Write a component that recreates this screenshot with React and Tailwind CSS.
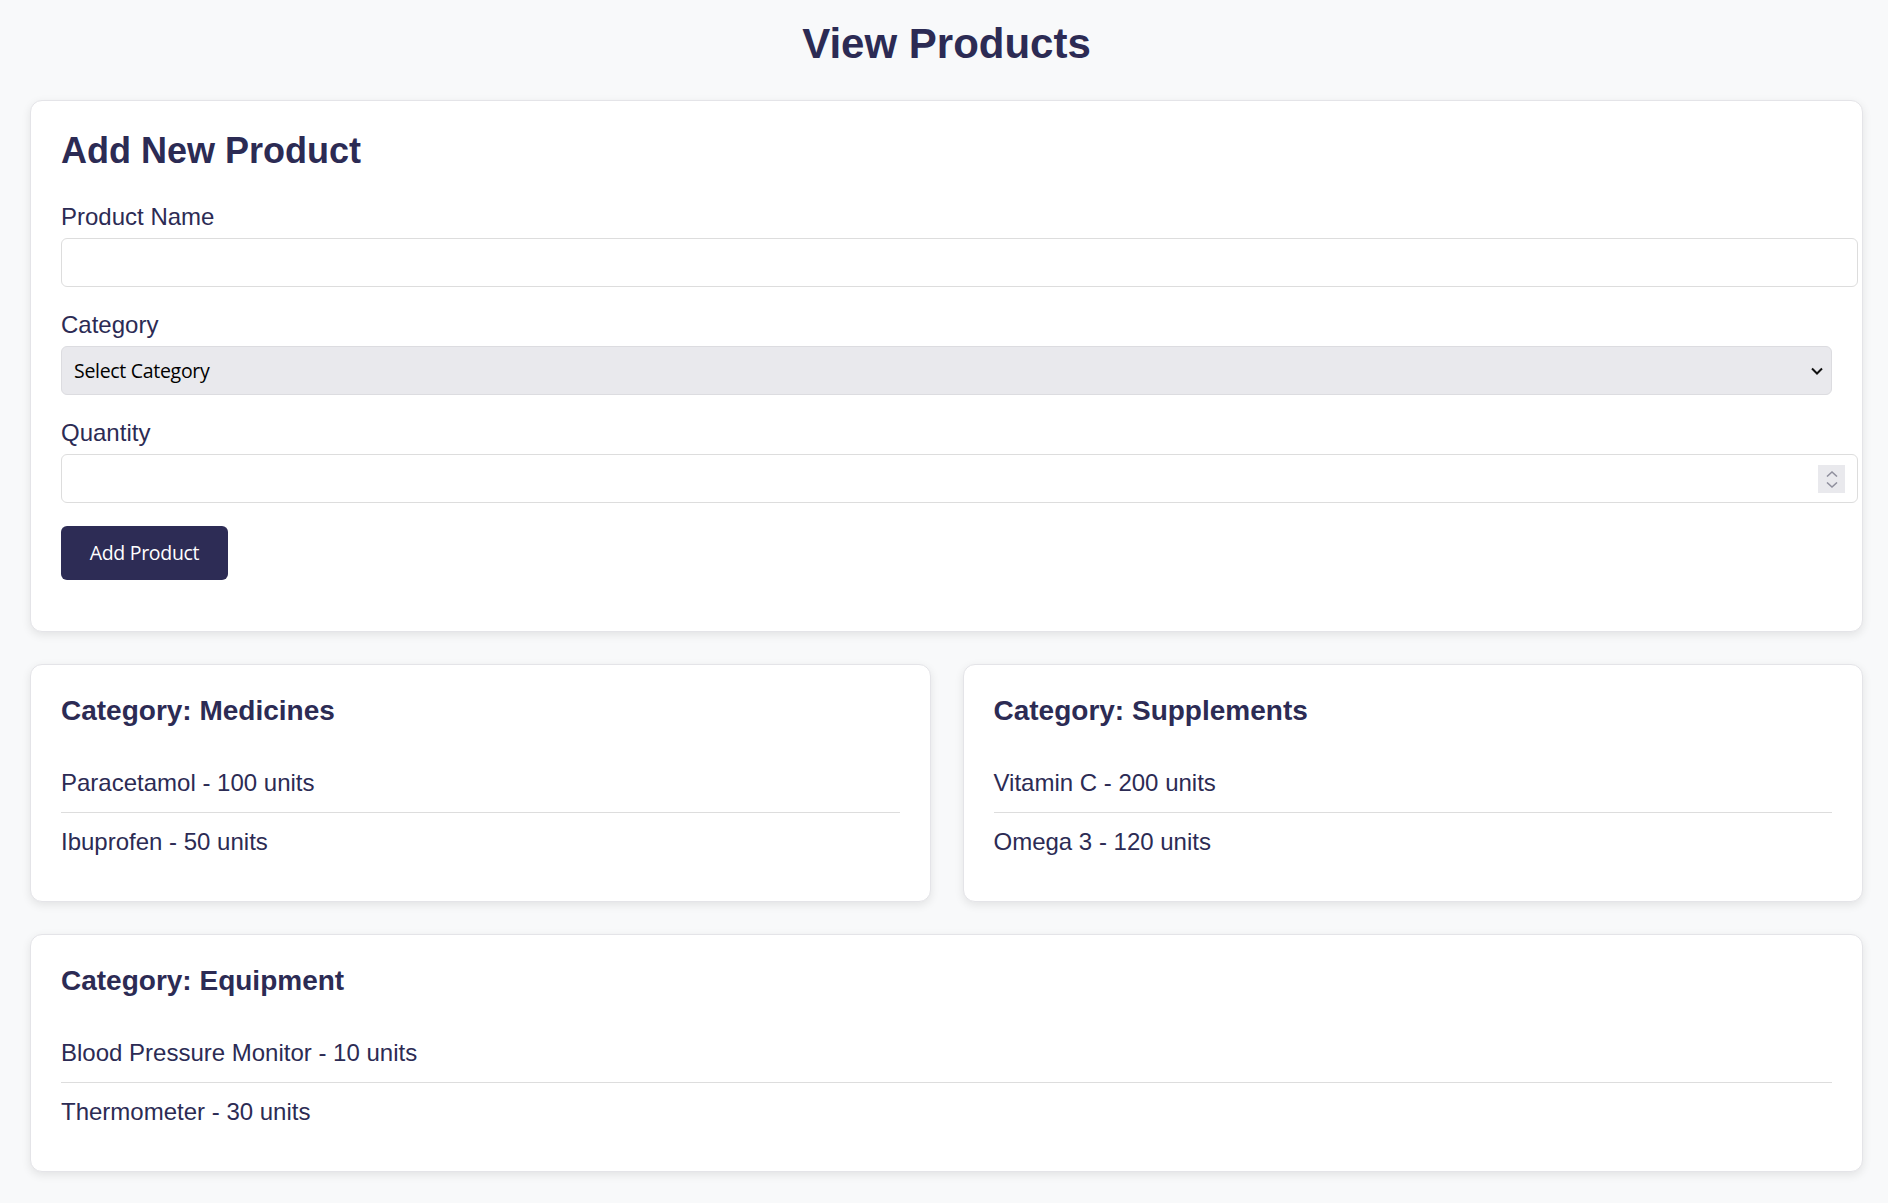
const categories = [
  {
    name: 'Medicines',
    items: [
      { name: 'Paracetamol', qty: 100 },
      { name: 'Ibuprofen', qty: 50 },
    ],
  },
  {
    name: 'Supplements',
    items: [
      { name: 'Vitamin C', qty: 200 },
      { name: 'Omega 3', qty: 120 },
    ],
  },
  {
    name: 'Equipment',
    items: [
      { name: 'Blood Pressure Monitor', qty: 10 },
      { name: 'Thermometer', qty: 30 },
    ],
  },
];

const card =
  'rounded-[12px] border border-[#e4e4e8] bg-white p-[30px] shadow-[0_3px_10px_rgba(0,0,0,0.09)]';

function Label({ children }) {
  return <label className="mb-[7px] block text-[24px] leading-[28px]">{children}</label>;
}

function CategoryCard({ category, wide }) {
  return (
    <div className={`${card} ${wide ? 'col-span-2' : ''}`}>
      <h3 className="mb-[27px] text-[28px] font-bold leading-[32px]">Category: {category.name}</h3>
      <ul>
        {category.items.map((item, i) => (
          <li
            key={item.name}
            className={`py-[15px] text-[24px] leading-[28px] ${
              i < category.items.length - 1 ? 'border-b border-[#dddddd]' : ''
            }`}
          >
            {item.name} - {item.qty} units
          </li>
        ))}
      </ul>
    </div>
  );
}

export default function App() {
  return (
    <div className="min-h-[1203px] bg-[#f8f9fa] pt-[20px] pr-[25px] pb-[31px] pl-[30px] font-['Liberation_Sans',Arial,sans-serif] text-[#2c2b54]">
      <h1 className="mb-[32px] text-center text-[42px] font-bold leading-[48px]">View Products</h1>

      <div className="grid grid-cols-2 gap-[32px]">
        <div className={`${card} col-span-2`}>
          <h2 className="mb-[32px] text-[36px] font-bold leading-[40px]">Add New Product</h2>

          <Label>Product Name</Label>
          <div className="mb-[24px] w-[calc(100%+26px)]">
            <input
              type="text"
              className="block h-[49px] w-full rounded-[6px] border border-[#dddddd] bg-white px-[12px] outline-none"
            />
          </div>

          <Label>Category</Label>
          <div className="relative mb-[24px]">
            <select className="block h-[49px] w-full appearance-none rounded-[6px] border border-[#dcdce0] bg-[#e9e9ed] pl-[12px] font-['Open_Sans','Noto_Sans',sans-serif] text-[19.5px] tracking-[-0.3px] text-black outline-none">
              <option>Select Category</option>
              <option>Medicines</option>
              <option>Supplements</option>
              <option>Equipment</option>
            </select>
            <svg
              className="pointer-events-none absolute right-[9px] top-[21px]"
              width="12"
              height="8"
              viewBox="0 0 12 8"
              fill="none"
            >
              <path d="M1 1.5 L6 6.5 L11 1.5" stroke="#111" strokeWidth="2" />
            </svg>
          </div>

          <Label>Quantity</Label>
          <div className="relative mb-[23px] w-[calc(100%+26px)]">
            <input
              type="text"
              inputMode="numeric"
              className="block h-[49px] w-full rounded-[6px] border border-[#dddddd] bg-white px-[12px] outline-none"
            />
            <div className="pointer-events-none absolute right-[13px] top-[11px] flex h-[28px] w-[27px] flex-col items-center justify-center gap-[5px] bg-[#e9e9ed]">
              <svg width="12" height="6" viewBox="0 0 12 6" fill="none">
                <path d="M1 5.5 L6 1 L11 5.5" stroke="#8f8f9d" strokeWidth="1.5" />
              </svg>
              <svg width="12" height="6" viewBox="0 0 12 6" fill="none">
                <path d="M1 0.5 L6 5 L11 0.5" stroke="#8f8f9d" strokeWidth="1.5" />
              </svg>
            </div>
          </div>

          <button className="mb-[21px] flex h-[54px] w-[167px] items-center justify-center rounded-[6px] bg-[#2d2c55] font-['Open_Sans','Noto_Sans',sans-serif] text-[19.5px] tracking-[-0.3px] text-white">
            Add Product
          </button>
        </div>

        {categories.map((c, i) => (
          <CategoryCard key={c.name} category={c} wide={i === 2} />
        ))}
      </div>
    </div>
  );
}
